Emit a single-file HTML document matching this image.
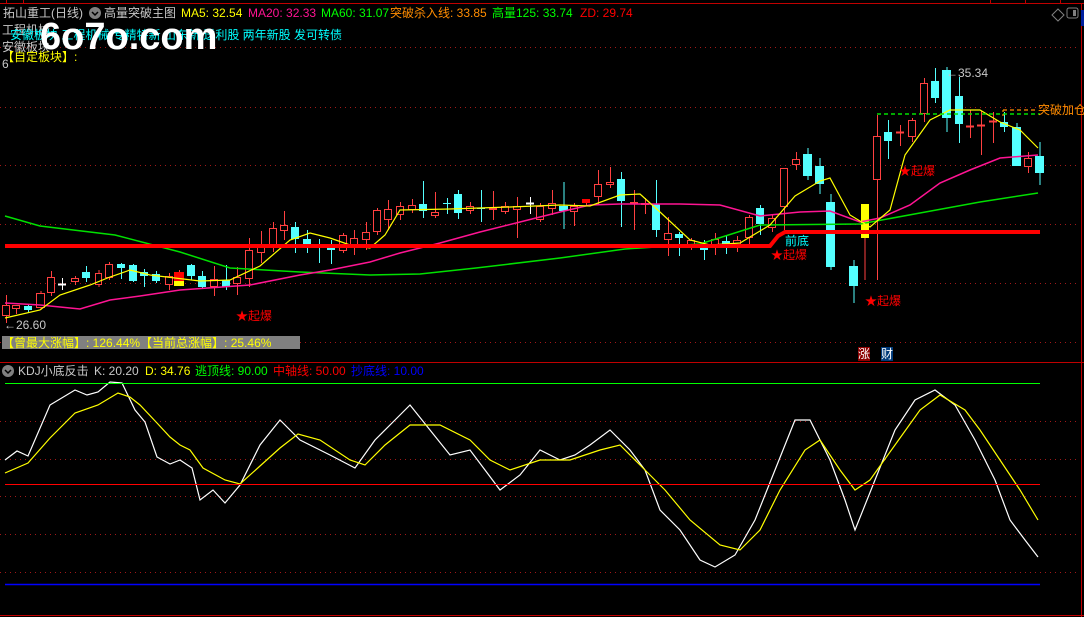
<!DOCTYPE html>
<html><head><meta charset="utf-8"><style>
html,body{margin:0;padding:0;background:#000;width:1084px;height:617px;overflow:hidden}
svg{display:block}
text{font-family:"Liberation Sans","Noto Sans CJK SC",sans-serif;font-size:12px}
</style></head><body>
<svg id="s" width="1084" height="617" xmlns="http://www.w3.org/2000/svg">
<rect width="1084" height="617" fill="#000"/>
<g stroke="#c00000" stroke-width="1">
<line x1="0" y1="3.5" x2="1084" y2="3.5"/>
<line x1="6.5" y1="0" x2="6.5" y2="3"/><line x1="23.5" y1="0" x2="23.5" y2="3"/>
<line x1="990.5" y1="0" x2="990.5" y2="3"/><line x1="1025.5" y1="0" x2="1025.5" y2="3"/><line x1="1060.5" y1="0" x2="1060.5" y2="3"/>
<line x1="1081.5" y1="3" x2="1081.5" y2="617"/>
<line x1="0" y1="362.5" x2="1084" y2="362.5"/>
<line x1="0" y1="615.5" x2="1084" y2="615.5"/>
</g>
<g stroke="#a01818" stroke-width="1" stroke-dasharray="1,4">
<line x1="0" y1="47.5" x2="1080" y2="47.5"/><line x1="0" y1="107.5" x2="1080" y2="107.5"/>
<line x1="0" y1="165.5" x2="1080" y2="165.5"/><line x1="0" y1="224.5" x2="1080" y2="224.5"/>
<line x1="0" y1="283.5" x2="1080" y2="283.5"/><line x1="0" y1="342.5" x2="1080" y2="342.5"/>
<line x1="0" y1="421.5" x2="1080" y2="421.5"/><line x1="0" y1="459.5" x2="1080" y2="459.5"/>
<line x1="0" y1="496.5" x2="1080" y2="496.5"/><line x1="0" y1="534.5" x2="1080" y2="534.5"/>
<line x1="0" y1="572.5" x2="1080" y2="572.5"/>
</g>
<g id="cand"></g>
<g id="lines"></g>
<!-- header -->
<text x="3" y="17" fill="#c8c8c8">拓山重工(日线)</text>
<circle cx="95" cy="13" r="6" fill="#808080"/><path d="M92 12 l3 3 l3 -3" stroke="#000" stroke-width="1.5" fill="none"/>
<text x="104" y="17" fill="#c8c8c8">高量突破主图</text>
<text x="181" y="17" fill="#ffff00">MA5: 32.54</text>
<text x="248" y="17" fill="#ff1493">MA20: 32.33</text>
<text x="321" y="17" fill="#00ff00">MA60: 31.07</text>
<text x="390" y="17" fill="#ff8c00">突破杀入线: 33.85</text>
<text x="492" y="17" fill="#00ff00">高量125: 33.74</text>
<text x="580" y="17" fill="#ff0000">ZD: 29.74</text>
<path d="M1058 9 l6 6 l-6 6 l-6 -6z" stroke="#808080" fill="none"/>
<rect x="1067" y="8" width="11" height="10" rx="2" stroke="#808080" fill="none"/><rect x="1073" y="10" width="3" height="6" fill="#808080"/>
<rect x="1081" y="10" width="3" height="16" fill="#0020a0"/>
<text x="2" y="34" fill="#c8c8c8">工程机械</text>
<text x="10" y="39" fill="#00ffff">安徽板块 工程机械 专精特新 山东新 送利股 两年新股 发可转债</text>
<text x="2" y="51" fill="#c8c8c8">安徽板块</text>
<text x="2" y="61" fill="#ffff00">【自定板块】:</text>
<text x="2" y="68" fill="#c8c8c8" font-size="10">6</text>
<text x="40" y="49" fill="#fff" style="font-size:38px;font-weight:bold">6o7o.com</text>
<!-- labels main -->
<text x="4" y="329" fill="#c8c8c8">←26.60</text>
<text x="946" y="77" fill="#c8c8c8">←35.34</text>
<text x="1038" y="114" fill="#ff8c00">突破加仓</text>
<text x="785" y="245" fill="#00ffff">前底</text>
<text x="236" y="320" fill="#ff0000">★起爆</text>
<text x="771" y="259" fill="#ff0000">★起爆</text>
<text x="865" y="305" fill="#ff0000">★起爆</text>
<text x="899" y="175" fill="#ff0000">★起爆</text>
<rect x="2" y="336" width="298" height="13" fill="#808080"/>
<rect x="2" y="349" width="298" height="0" fill="#808080"/>
<text x="2" y="347" fill="#ffff00">【曾最大涨幅】: 126.44%【当前总涨幅】: 25.46%</text>
<rect x="858" y="347" width="12" height="14" fill="#8b0000"/><text x="858" y="358" fill="#fff">涨</text>
<rect x="881" y="347" width="12" height="14" fill="#003a7a"/><text x="881" y="358" fill="#fff">财</text>
<!-- KDJ header -->
<circle cx="8" cy="371" r="6" fill="#808080"/><path d="M5 370 l3 3 l3 -3" stroke="#000" stroke-width="1.5" fill="none"/>
<text x="18" y="375" fill="#c8c8c8">KDJ小底反击</text>
<text x="94" y="375" fill="#c8c8c8">K: 20.20</text>
<text x="145" y="375" fill="#ffff00">D: 34.76</text>
<text x="195" y="375" fill="#00ff00">逃顶线: 90.00</text>
<text x="273" y="375" fill="#ff0000">中轴线: 50.00</text>
<text x="351" y="375" fill="#0000ff">抄底线: 10.00</text>
<line x1="5" y1="383.5" x2="1040" y2="383.5" stroke="#00ff00"/>
<line x1="5" y1="484.5" x2="1040" y2="484.5" stroke="#ff0000"/>
<line x1="5" y1="584.5" x2="1040" y2="584.5" stroke="#0000ff" stroke-width="1.5"/>
</svg>
<script>
var NS="http://www.w3.org/2000/svg";
function el(p,t,a){var e=document.createElementNS(NS,t);for(var k in a)e.setAttribute(k,a[k]);p.appendChild(e);return e;}
var C=document.getElementById('cand'),L=document.getElementById('lines');
// x1,x2,bodyTop,bodyBot,wickTop,wickBot,type r=red hollow,c=cyan,R=red solid,w=white cross,x=red cross, y=yellow
var cs=[[2,10,305,316,295,323,'r'],[12,20,305,309,305,314,'r'],[24,32,306,310,305,312,'c'],[36,45,293,308,291,310,'r'],[47,55,277,293,271,296,'r'],[58,66,284,285,278,290,'w'],[71,79,278,282,276,285,'r'],[82,90,272,278,266,282,'c'],[95,102,273,285,270,287,'r'],[105,113,264,278,262,280,'r'],[117,125,264,268,263,279,'c'],[129,137,265,281,264,282,'c'],[140,148,272,276,269,287,'c'],[152,160,274,281,271,283,'c'],[165,173,276,285,273,290,'r'],[174,184,272,281,270,286,'R'],[187,195,265,276,264,280,'c'],[198,206,276,287,271,288,'c'],[210,218,279,287,266,296,'r'],[222,230,280,287,265,290,'c'],[233,241,277,284,267,295,'r'],[245,253,250,279,238,287,'r'],[257,265,245,253,231,263,'r'],[269,277,228,246,222,252,'r'],[280,288,225,231,211,240,'r'],[291,299,227,239,222,253,'c'],[303,311,239,245,230,253,'c'],[315,323,244,247,239,263,'c'],[327,335,247,250,240,264,'c'],[339,347,235,251,233,253,'r'],[350,358,238,246,230,255,'r'],[362,370,232,240,222,250,'r'],[373,381,210,232,208,235,'r'],[384,392,209,220,200,230,'r'],[396,404,206,215,202,220,'r'],[408,416,205,210,199,213,'r'],[419,427,204,211,181,218,'c'],[431,439,212,216,192,218,'r'],[443,451,203,204,198,214,'c'],[454,462,194,213,190,219,'c'],[466,474,206,211,202,214,'r'],[477,485,208,209,190,222,'c'],[489,497,208,210,191,220,'r'],[501,509,206,212,202,214,'r'],[513,521,206,210,197,238,'r'],[526,534,203,204,197,214,'w'],[536,544,206,220,203,222,'r'],[548,556,203,209,190,215,'r'],[559,568,206,211,182,229,'c'],[570,578,206,212,203,226,'r'],[582,590,199,203,199,205,'R'],[594,602,184,197,170,205,'r'],[606,614,182,185,167,188,'r'],[617,625,179,201,172,227,'c'],[630,638,202,204,190,230,'r'],[641,649,203,205,198,214,'r'],[652,660,204,230,180,237,'c'],[664,672,233,240,217,256,'r'],[675,683,234,238,232,256,'c'],[687,695,240,246,238,250,'r'],[700,708,244,250,240,260,'c'],[711,719,239,245,233,255,'r'],[722,730,241,246,235,254,'c'],[733,741,240,246,236,252,'r'],[745,753,217,238,215,246,'r'],[756,764,208,224,205,235,'c'],[768,776,218,228,215,232,'r'],[780,788,168,207,168,230,'r'],[792,800,159,165,152,170,'r'],[803,812,154,176,148,180,'c'],[815,824,166,184,158,194,'c'],[826,835,202,267,194,270,'c'],[849,858,266,286,260,303,'c'],[873,881,136,180,115,280,'r'],[884,892,132,141,120,159,'c'],[896,904,132,134,125,146,'x'],[908,916,120,137,118,142,'r'],[920,928,83,114,78,122,'r'],[931,939,81,98,68,103,'c'],[942,951,70,118,67,132,'c'],[955,963,96,124,77,143,'c'],[966,974,126,128,110,138,'x'],[977,985,125,127,111,155,'x'],[989,997,121,123,112,143,'x'],[1000,1008,122,127,112,132,'c'],[1012,1021,127,166,123,166,'c'],[1024,1032,158,167,152,173,'r'],[1035,1044,156,173,142,185,'c']];
cs.forEach(function(c){var x=(c[0]+c[1])/2+0.5,t=c[6];
 var col=(t=='c')?'#54ffff':(t=='w'?'#ffffff':'#ff4040');
 el(C,'line',{x1:x,y1:c[4],x2:x,y2:c[5],stroke:col});
 if(t=='c'){el(C,'rect',{x:c[0],y:c[2],width:c[1]-c[0],height:Math.max(1,c[3]-c[2]),fill:col});}
 else if(t=='R'){el(C,'rect',{x:c[0],y:c[2],width:c[1]-c[0],height:c[3]-c[2],fill:'#ff0000'});}
 else if(t=='w'||t=='x'){el(C,'line',{x1:c[0],y1:c[2]+0.5,x2:c[1],y2:c[2]+0.5,stroke:col,'stroke-width':2});}
 else{el(C,'rect',{x:c[0]+0.5,y:c[2]+0.5,width:c[1]-c[0]-1,height:Math.max(1,c[3]-c[2]-1),fill:'#000',stroke:col});}
});
// yellow bar and red/yellow special
el(C,'rect',{x:174,y:281,width:10,height:5,fill:'#ffff00'});
el(C,'rect',{x:861,y:204,width:8,height:34,fill:'#ffff00'});
el(C,'line',{x1:865,y1:238,x2:865,y2:280,stroke:'#ff4040'});
function pl(pts,col,w,par,dash){el(par||L,'polyline',{points:pts,fill:'none',stroke:col,'stroke-width':w||1,'stroke-dasharray':dash||''});}
pl("5,216 40,226 115,235 180,252 230,268 300,272 370,275 420,274 476,268 560,258 625,249 700,244 760,225 860,224 920,213 980,202 1038,193","#00e000",1.5);
pl("5,303 40,305 80,309 110,300 140,296 180,290 250,285 300,275 330,270 370,262 400,253 440,243 480,232 520,222 560,212 590,205 620,204 680,204 720,205 760,216 800,212 830,211 860,222 880,218 910,205 940,183 970,170 1000,158 1038,155","#ff1493",1.5);
pl("5,318 40,310 60,295 90,285 110,277 130,270 150,275 200,281 230,280 260,266 290,240 310,233 330,238 350,245 370,248 385,235 400,210 450,209 510,207 560,205 590,206 620,195 640,194 660,212 690,240 710,245 740,243 770,225 795,196 820,181 830,178 850,215 870,227 890,210 905,155 930,120 950,110 980,110 1000,122 1020,130 1038,148","#ffff00",1.2);
// thick red line
pl("5,246 770,246 778,236 785,232 1040,232","#ff0000",4);
pl("877,114 1040,114","#00e000",1.5,null,"4,3");
pl("1003,110 1037,110","#ff8c00",1.2,null,"4,3");
pl("1003,110 1003,118","#ff8c00",1.2,null,"2,2");
// KDJ
pl("5,460 17,451 28,456 50,405 75,390 87,395 98,392 110,382 122,383 135,410 145,422 157,457 170,464 180,460 192,468 200,500 213,490 225,503 240,485 260,445 280,420 300,440 330,455 355,468 375,440 395,420 410,405 430,430 450,455 470,450 485,470 500,490 520,475 540,450 560,460 575,455 590,445 610,430 630,450 645,470 660,510 680,530 700,560 715,567 735,555 755,520 775,470 795,420 810,420 830,460 845,500 855,530 875,480 895,430 915,400 935,390 955,405 975,440 995,480 1010,520 1025,540 1038,557","#ffffff",1.2);
pl("5,473 28,463 50,438 75,413 98,405 118,393 130,397 140,405 157,423 170,437 180,445 190,450 203,468 225,480 240,484 260,466 280,448 298,434 320,440 350,460 365,465 385,445 410,425 440,425 470,440 490,460 510,470 540,460 570,460 600,450 620,445 640,465 665,490 690,520 720,545 740,550 760,530 780,490 805,450 820,440 840,470 855,490 870,480 895,445 920,410 940,395 965,410 980,430 1000,460 1020,490 1038,520","#ffff00",1.2);
</script>
</body></html>
